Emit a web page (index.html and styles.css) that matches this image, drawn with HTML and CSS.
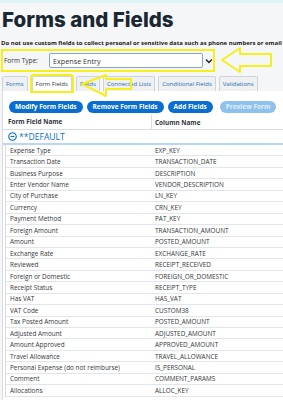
FILE: index.html
```html
<!DOCTYPE html>
<html lang="en">
    <head>
        <meta charset="UTF-8">
        <title>Forms and Fields</title>
        <link rel="stylesheet" href="styles.css">
    </head>
    <body>
        <div class="topbar"></div>
        <div class="page">
            <h1>Forms and Fields</h1>
            <p class="warn">Do not use custom fields to collect personal or sensitive data such as phone numbers or email addresses.</p>

            <div class="formtype">
                <span class="label">Form Type:</span>
                <span class="select">Expense Entry</span>
                <svg class="chevron" width="8" height="6" viewBox="0 0 8 6"><path d="M1 1.5 L4 4.5 L7 1.5" fill="none" stroke="#222" stroke-width="1.4"/></svg>
            </div>
            <svg class="arrow arrow-one" width="54" height="28" viewBox="0 0 54 28">
                <path d="M2 14 L20 2 L20 8 L51 8 L51 20 L20 20 L20 26 Z" fill="none" stroke="#f7ef1a" stroke-width="2" stroke-linejoin="round"/>
            </svg>

            <div class="tabs">
                <span class="tab">Forms</span>
                <span class="tab active">Form Fields</span>
                <span class="tab">Fields</span>
                <span class="tab">Connected Lists</span>
                <span class="tab">Conditional Fields</span>
                <span class="tab">Validations</span>
            </div>
            <svg class="arrow arrow-two" width="54" height="24" viewBox="0 0 54 24">
                <path d="M2 10 L26 1 L26 5 L51 5 L51 15 L26 15 L26 22 Z" fill="none" stroke="#f7ef1a" stroke-width="2" stroke-linejoin="round"/>
            </svg>

            <div class="panel">
                <div class="toolbar">
                    <button>Modify Form Fields</button>
                    <button>Remove Form Fields</button>
                    <button>Add Fields</button>
                    <button class="disabled">Preview Form</button>
                    <span class="search">| Sea</span>
                </div>

                <div class="head">
                    <span class="col-name">Form Field Name</span>
                    <span class="col-column">Column Name</span>
                </div>
                <div class="group">
                    <svg width="9" height="9" viewBox="0 0 10 10"><circle cx="5" cy="5" r="4.2" fill="none" stroke="#0a6ed1" stroke-width="1.2"/><path d="M2.8 5 H7.2" stroke="#0a6ed1" stroke-width="1.2"/></svg>
                    <span>**DEFAULT</span>
                </div>

                <div class="rows">
                    <div class="row"><span>Expense Type</span><span>EXP_KEY</span></div>
                    <div class="row"><span>Transaction Date</span><span>TRANSACTION_DATE</span></div>
                    <div class="row"><span>Business Purpose</span><span>DESCRIPTION</span></div>
                    <div class="row"><span>Enter Vendor Name</span><span>VENDOR_DESCRIPTION</span></div>
                    <div class="row"><span>City of Purchase</span><span>LN_KEY</span></div>
                    <div class="row"><span>Currency</span><span>CRN_KEY</span></div>
                    <div class="row"><span>Payment Method</span><span>PAT_KEY</span></div>
                    <div class="row"><span>Foreign Amount</span><span>TRANSACTION_AMOUNT</span></div>
                    <div class="row"><span>Amount</span><span>POSTED_AMOUNT</span></div>
                    <div class="row"><span>Exchange Rate</span><span>EXCHANGE_RATE</span></div>
                    <div class="row"><span>Reviewed</span><span>RECEIPT_RECEIVED</span></div>
                    <div class="row"><span>Foreign or Domestic</span><span>FOREIGN_OR_DOMESTIC</span></div>
                    <div class="row"><span>Receipt Status</span><span>RECEIPT_TYPE</span></div>
                    <div class="row"><span>Has VAT</span><span>HAS_VAT</span></div>
                    <div class="row"><span>VAT Code</span><span>CUSTOM38</span></div>
                    <div class="row"><span>Tax Posted Amount</span><span>POSTED_AMOUNT</span></div>
                    <div class="row"><span>Adjusted Amount</span><span>ADJUSTED_AMOUNT</span></div>
                    <div class="row"><span>Amount Approved</span><span>APPROVED_AMOUNT</span></div>
                    <div class="row"><span>Travel Allowance</span><span>TRAVEL_ALLOWANCE</span></div>
                    <div class="row"><span>Personal Expense (do not reimburse)</span><span>IS_PERSONAL</span></div>
                    <div class="row"><span>Comment</span><span>COMMENT_PARAMS</span></div>
                    <div class="row"><span>Allocations</span><span>ALLOC_KEY</span></div>
                </div>
            </div>
        </div>
    </body>
</html>
```

FILE: styles.css
```css
body {
    margin: 0;
    height: 400px;
    background-color: #f5f6f7;
    font-family: "Open Sans", Arial, sans-serif;
    color: #32363a;
    overflow: hidden;
}

.topbar {
    height: 3px;
    background-color: #dff4f6;
}

.page {
    position: relative;
}

h1 {
    margin: 0;
    padding: 5px 0 0 2px;
    height: 25px;
    font-family: Inter, sans-serif;
    font-weight: 800;
    font-size: 20.5px;
    line-height: 24px;
    color: #1a2733;
}

.warn {
    margin: 6px 0 0 1px;
    font-size: 6px;
    font-weight: bold;
    line-height: 9px;
    white-space: nowrap;
    overflow: hidden;
    color: #1a1a1a;
}

.formtype {
    display: flex;
    align-items: center;
    width: 210px;
    height: 19px;
    margin: 1px 0 0 1px;
    border: 2px solid #f7ef1a;
}

.formtype .label {
    width: 46px;
    padding-left: 1px;
    font-size: 6.5px;
    color: #32363a;
}

.select {
    display: flex;
    align-items: center;
    width: 152px;
    height: 13px;
    padding-left: 3px;
    border: 1px solid #8da3c7;
    border-radius: 2px;
    background-color: #fff;
    font-size: 7.2px;
    color: #32363a;
}

.chevron {
    margin-left: 2px;
}

.arrow {
    position: absolute;
}

.arrow-one {
    left: 220px;
    top: 43px;
}

.tabs {
    display: flex;
    gap: 3px;
    margin-top: 3px;
    padding-left: 2px;
    height: 16px;
    align-items: flex-end;
}

.tab {
    padding: 0 3px;
    height: 14px;
    line-height: 14px;
    font-size: 6px;
    color: #2a6cb5;
    background-color: #eef0f2;
    border: 1px solid #cfd4d9;
    border-bottom: none;
    border-radius: 2px 2px 0 0;
    white-space: nowrap;
}

.tab.active {
    margin: 0 1px;
    color: #32363a;
    background-color: #fff;
    outline: 2px solid #f7ef1a;
}

.arrow-two {
    left: 80px;
    top: 71px;
}

.panel {
    background-color: #fff;
    border-left: 1px solid #d9dde1;
    margin-left: 2px;
    padding-top: 9px;
    height: 320px;
}

.toolbar {
    display: flex;
    align-items: center;
    gap: 4px;
    padding-left: 6px;
    height: 13px;
    white-space: nowrap;
    overflow: hidden;
}

.toolbar button {
    flex-shrink: 0;
    height: 12px;
    padding: 0 6px;
    border: none;
    border-radius: 6px;
    background-color: #0a6ed1;
    color: #fff;
    font-family: "Open Sans", Arial, sans-serif;
    font-size: 6.5px;
    font-weight: bold;
    line-height: 12px;
}

.toolbar button.disabled {
    margin-left: 3px;
    background-color: #8fc1ef;
    color: #e3effb;
}

.search {
    margin-left: 8px;
    font-size: 6.5px;
    color: #6a6d70;
}

.head {
    display: flex;
    align-items: center;
    height: 14px;
    margin-top: 2px;
    border-bottom: 1px solid #d9dde1;
    font-size: 6.4px;
    font-weight: bold;
    color: #32363a;
}

.col-name {
    width: 143px;
    padding-left: 5px;
    height: 14px;
    line-height: 14px;
    border-right: 1px solid #d9dde1;
}

.col-column {
    padding-left: 3px;
}

.group {
    display: flex;
    align-items: center;
    gap: 2px;
    height: 13px;
    padding-left: 5px;
    border-bottom: 2px solid #b9d6f3;
    font-size: 8.6px;
    color: #0a6ed1;
}

.rows {
    margin-left: 2px;
    border-left: 1px solid #d9dde1;
}

.row {
    display: flex;
    align-items: center;
    height: 10.45px;
    border-bottom: 1px solid #e3e6e9;
    font-size: 6.4px;
    color: #32363a;
}

.row span:first-child {
    width: 145px;
    padding-left: 4px;
}
```
